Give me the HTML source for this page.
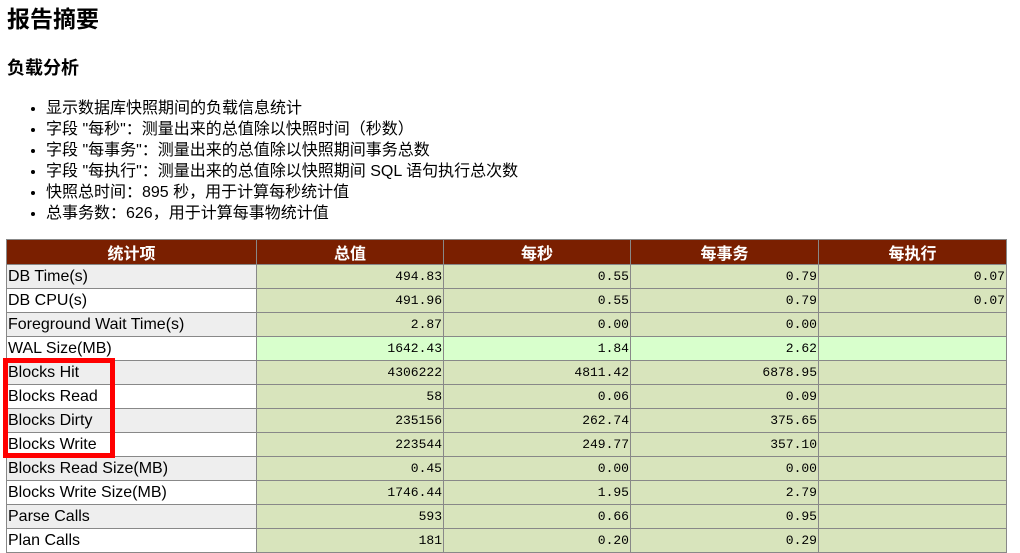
<!DOCTYPE html>
<html><head><meta charset="utf-8"><style>
body{margin:0;background:#fff;font-family:"Liberation Sans","Noto Sans CJK SC",sans-serif;color:#000;width:1020px;height:553px;overflow:hidden;position:relative}
h1{position:absolute;left:7px;top:3px;margin:0;font-size:23px;line-height:32px;font-weight:bold}
h2{position:absolute;left:7px;top:55px;margin:0;font-size:18px;line-height:26px;font-weight:bold}
ul{position:absolute;left:0;top:98px;margin:0;padding-left:46px;font-size:16px;line-height:21px}
table{position:absolute;left:6px;top:239px;border-collapse:collapse;table-layout:fixed}
td,th{border:1px solid #888;height:23px;padding:0 1px;overflow:hidden;white-space:nowrap}
th{background:#7a1f00;color:#fff;font-size:16px;font-weight:bold;height:23px}
td.l{font-size:16px}
td.v{text-align:right;font-family:"Liberation Mono",monospace;font-size:13px;background:#d8e4bc}
tr.o td.l{background:#eee}
tr.e td.l{background:#fff}
tr.w td.v{background:#d8ffcc}
.box{position:absolute;left:3px;top:358px;width:102px;height:90px;border:5px solid #f00}
</style></head><body>
<h1>报告摘要</h1>
<h2>负载分析</h2>
<ul>
<li>显示数据库快照期间的负载信息统计</li>
<li>字段 "每秒"：测量出来的总值除以快照时间（秒数）</li>
<li>字段 "每事务"：测量出来的总值除以快照期间事务总数</li>
<li>字段 "每执行"：测量出来的总值除以快照期间 SQL 语句执行总次数</li>
<li>快照总时间：895 秒，用于计算每秒统计值</li>
<li>总事务数：626，用于计算每事物统计值</li>
</ul>
<table>
<colgroup><col style="width:250px"><col style="width:187px"><col style="width:187px"><col style="width:188px"><col style="width:188px"></colgroup>
<tr><th>统计项</th><th>总值</th><th>每秒</th><th>每事务</th><th>每执行</th></tr>
<tr class="o"><td class="l">DB Time(s)</td><td class="v">494.83</td><td class="v">0.55</td><td class="v">0.79</td><td class="v">0.07</td></tr>
<tr class="e"><td class="l">DB CPU(s)</td><td class="v">491.96</td><td class="v">0.55</td><td class="v">0.79</td><td class="v">0.07</td></tr>
<tr class="o"><td class="l">Foreground Wait Time(s)</td><td class="v">2.87</td><td class="v">0.00</td><td class="v">0.00</td><td class="v"></td></tr>
<tr class="e w"><td class="l">WAL Size(MB)</td><td class="v">1642.43</td><td class="v">1.84</td><td class="v">2.62</td><td class="v"></td></tr>
<tr class="o"><td class="l">Blocks Hit</td><td class="v">4306222</td><td class="v">4811.42</td><td class="v">6878.95</td><td class="v"></td></tr>
<tr class="e"><td class="l">Blocks Read</td><td class="v">58</td><td class="v">0.06</td><td class="v">0.09</td><td class="v"></td></tr>
<tr class="o"><td class="l">Blocks Dirty</td><td class="v">235156</td><td class="v">262.74</td><td class="v">375.65</td><td class="v"></td></tr>
<tr class="e"><td class="l">Blocks Write</td><td class="v">223544</td><td class="v">249.77</td><td class="v">357.10</td><td class="v"></td></tr>
<tr class="o"><td class="l">Blocks Read Size(MB)</td><td class="v">0.45</td><td class="v">0.00</td><td class="v">0.00</td><td class="v"></td></tr>
<tr class="e"><td class="l">Blocks Write Size(MB)</td><td class="v">1746.44</td><td class="v">1.95</td><td class="v">2.79</td><td class="v"></td></tr>
<tr class="o"><td class="l">Parse Calls</td><td class="v">593</td><td class="v">0.66</td><td class="v">0.95</td><td class="v"></td></tr>
<tr class="e"><td class="l">Plan Calls</td><td class="v">181</td><td class="v">0.20</td><td class="v">0.29</td><td class="v"></td></tr>
</table>
<div class="box"></div>
</body></html>
